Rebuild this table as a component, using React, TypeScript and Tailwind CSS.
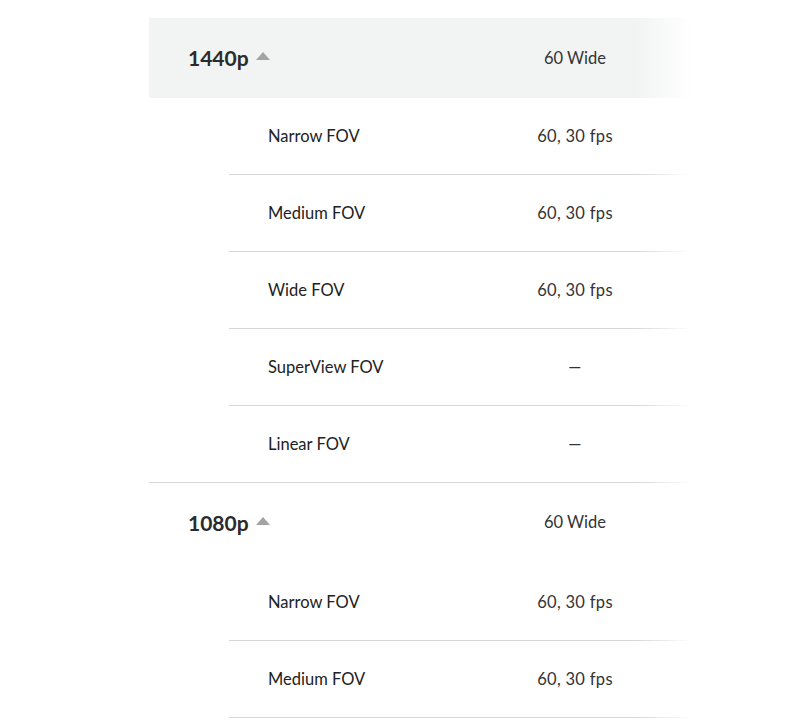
type Mode = {
  label: string;
  value: string;
};

type Group = {
  resolution: string;
  summary: string;
  highlighted?: boolean;
  continues?: boolean;
  modes: Mode[];
};

const groups: Group[] = [
  {
    resolution: "1440p",
    summary: "60 Wide",
    highlighted: true,
    modes: [
      { label: "Narrow FOV", value: "60, 30 fps" },
      { label: "Medium FOV", value: "60, 30 fps" },
      { label: "Wide FOV", value: "60, 30 fps" },
      { label: "SuperView FOV", value: "—" },
      { label: "Linear FOV", value: "—" },
    ],
  },
  {
    resolution: "1080p",
    summary: "60 Wide",
    continues: true,
    modes: [
      { label: "Narrow FOV", value: "60, 30 fps" },
      { label: "Medium FOV", value: "60, 30 fps" },
    ],
  },
];

function Caret() {
  return (
    <svg width="14" height="8" viewBox="0 0 14 8" className="ml-[7px] mt-[-4px]">
      <path d="M7 0 L14 8 L0 8 Z" fill="#a3a3a3" />
    </svg>
  );
}

export default function App() {
  return (
    <div
      className="h-[724px] w-[800px] overflow-hidden bg-white pt-[18px] pl-[149px]"
      style={{ fontFamily: "Lato, 'Open Sans', sans-serif" }}
    >
      <div className="relative w-[566px]">
        {groups.map((group) => (
          <div
            key={group.resolution}
            className={group.continues ? "" : "border-b border-[#d6d6d6]"}
          >
            <div
              className={`flex items-center ${
                group.highlighted ? "h-[80px] bg-[#f2f3f3]" : "h-[81px] pb-[2px]"
              }`}
            >
              <div className="flex w-[346px] items-center pl-[39px]">
                <span className="text-[21px] font-bold text-[#2b2b2b]">{group.resolution}</span>
                <Caret />
              </div>
              <div className="w-[160px] text-center text-[16.5px] text-[#333]">{group.summary}</div>
            </div>
            {group.modes.map((mode, i) => {
              const last = i === group.modes.length - 1 && !group.continues;
              return (
                <div
                  key={mode.label}
                  className={`ml-[80px] flex items-center ${
                    last ? "h-[76px]" : "h-[77px] border-b border-[#d6d6d6]"
                  }`}
                >
                  <div className="w-[266px] pl-[39px] text-[16.5px] text-[#222]">{mode.label}</div>
                  <div className="w-[160px] text-center text-[16.5px] tracking-[0.3px] text-[#333]">
                    {mode.value}
                  </div>
                </div>
              );
            })}
          </div>
        ))}
        <div className="pointer-events-none absolute top-0 right-0 bottom-0 w-[80px] bg-linear-to-r from-white/0 via-white via-70% to-white" />
      </div>
    </div>
  );
}
